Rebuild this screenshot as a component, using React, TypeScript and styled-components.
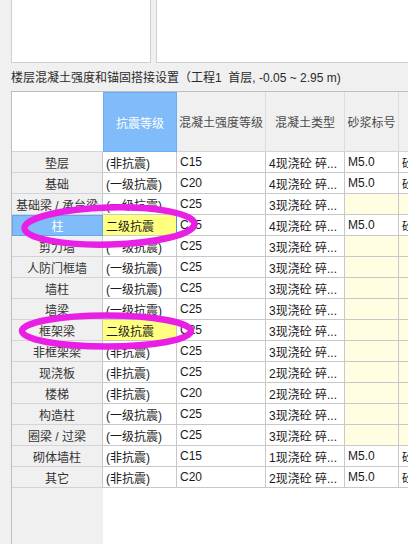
import styled, { createGlobalStyle, css } from "styled-components";

const GlobalStyle = createGlobalStyle`
  html, body {
    margin: 0;
    padding: 0;
    background: #f0f0f0;
    overflow: hidden;
  }
`;

const Page = styled.div`
  position: relative;
  width: 408px;
  height: 544px;
  box-sizing: border-box;
  padding-left: 11px;
  overflow: hidden;
  display: flex;
  flex-direction: column;
  background: #f0f0f0;
  font-family: "Liberation Sans", "Noto Sans CJK SC", sans-serif;
  font-size: 12px;
`;

const TopPanels = styled.div`
  display: flex;
  gap: 5px;
  height: 63px;
  flex-shrink: 0;
`;

const Panel = styled.div<{ $width: number }>`
  flex-shrink: 0;
  width: ${(p) => p.$width}px;
  box-sizing: border-box;
  background: #fff;
  border: 1px solid #cfcfcf;
  border-top: none;
`;

const Title = styled.div`
  height: 28px;
  box-sizing: border-box;
  padding-top: 7px;
  line-height: 17px;
  color: #2b2b2b;
  white-space: nowrap;
`;

const Grid = styled.div`
  flex: 1;
  display: grid;
  grid-template-columns: 91px 74px 89px 79px 54px 80px;
  grid-template-rows: 60px repeat(16, 21px) 1fr;
  border-left: 1px solid #bdbdbd;
  border-top: 1px solid #bdbdbd;
`;

const cellBase = css`
  box-sizing: border-box;
  overflow: hidden;
  white-space: nowrap;
  display: flex;
  align-items: center;
`;

const Corner = styled.div`
  ${cellBase};
  background: #fff;
  border-bottom: 1px solid #d4d4d4;
`;

const HeadCell = styled.div<{ $active?: boolean }>`
  ${cellBase};
  justify-content: center;
  background: #f0f0f0;
  color: #4a4a4a;
  border-right: 1px solid #dcdcdc;
  border-bottom: 1px solid #d4d4d4;

  ${(p) =>
    p.$active &&
    css`
      background: #80bbfa;
      color: #fff;
      border: 1px solid #6aadf4;
    `}
`;

const RowHead = styled.div<{ $selected?: boolean }>`
  ${cellBase};
  justify-content: center;
  background: #f0f0f0;
  color: #333;
  border-right: 1px solid #c8c8c8;
  border-bottom: 1px solid #d4d4d4;

  ${(p) =>
    p.$selected &&
    css`
      background: #80bbfa;
      color: #fff;
      border: 1px solid #62a6ef;
    `}
`;

type Tone = "plain" | "strong" | "soft";

const toneBg: Record<Tone, string> = {
  plain: "#fff",
  strong: "#ffff80",
  soft: "#fffde2",
};

const Cell = styled.div<{ $tone: Tone; $edge?: boolean }>`
  ${cellBase};
  padding: 0 3px;
  color: #1a1a1a;
  background: ${(p) => toneBg[p.$tone]};
  border-right: 1px solid ${(p) => (p.$edge ? "#4b97ea" : "#c8c8c8")};
  border-bottom: 1px solid #c8c8c8;
`;

const FillHead = styled.div`
  background: #f0f0f0;
`;

const FillBody = styled.div`
  grid-column: 2 / -1;
  background: #fff;
`;

const Marks = styled.svg`
  position: absolute;
  left: 0;
  top: 0;
  width: 408px;
  height: 544px;
  pointer-events: none;
`;

type Row = {
  name: string;
  grade: string;
  strength: string;
  concrete: string;
  mortar: string;
  kind: string;
  selected?: boolean;
  changed?: boolean;
};

const rows: Row[] = [
  { name: "垫层", grade: "(非抗震)", strength: "C15", concrete: "4现浇砼 碎...", mortar: "M5.0", kind: "砼" },
  { name: "基础", grade: "(一级抗震)", strength: "C20", concrete: "4现浇砼 碎...", mortar: "M5.0", kind: "砼" },
  { name: "基础梁 / 承台梁", grade: "(一级抗震)", strength: "C25", concrete: "3现浇砼 碎...", mortar: "", kind: "" },
  { name: "柱", grade: "二级抗震", strength: "C25", concrete: "4现浇砼 碎...", mortar: "M5.0", kind: "砼", selected: true, changed: true },
  { name: "剪力墙", grade: "(一级抗震)", strength: "C25", concrete: "3现浇砼 碎...", mortar: "", kind: "" },
  { name: "人防门框墙", grade: "(一级抗震)", strength: "C25", concrete: "3现浇砼 碎...", mortar: "", kind: "" },
  { name: "墙柱", grade: "(一级抗震)", strength: "C25", concrete: "3现浇砼 碎...", mortar: "", kind: "" },
  { name: "墙梁", grade: "(一级抗震)", strength: "C25", concrete: "3现浇砼 碎...", mortar: "", kind: "" },
  { name: "框架梁", grade: "二级抗震", strength: "C25", concrete: "3现浇砼 碎...", mortar: "", kind: "", changed: true },
  { name: "非框架梁", grade: "(非抗震)", strength: "C25", concrete: "3现浇砼 碎...", mortar: "", kind: "" },
  { name: "现浇板", grade: "(非抗震)", strength: "C25", concrete: "2现浇砼 碎...", mortar: "", kind: "" },
  { name: "楼梯", grade: "(非抗震)", strength: "C20", concrete: "2现浇砼 碎...", mortar: "", kind: "" },
  { name: "构造柱", grade: "(一级抗震)", strength: "C25", concrete: "3现浇砼 碎...", mortar: "", kind: "" },
  { name: "圈梁 / 过梁", grade: "(一级抗震)", strength: "C25", concrete: "3现浇砼 碎...", mortar: "", kind: "" },
  { name: "砌体墙柱", grade: "(非抗震)", strength: "C15", concrete: "1现浇砼 碎...", mortar: "M5.0", kind: "砼" },
  { name: "其它", grade: "(非抗震)", strength: "C20", concrete: "2现浇砼 碎...", mortar: "M5.0", kind: "砼" },
];

export default function App() {
  return (
    <Page>
      <GlobalStyle />
      <TopPanels>
        <Panel $width={140} />
        <Panel $width={300} />
      </TopPanels>
      <Title>楼层混凝土强度和锚固搭接设置（工程1&nbsp;&nbsp;首层, -0.05 ~ 2.95 m)</Title>
      <Grid>
        <Corner />
        <HeadCell $active>抗震等级</HeadCell>
        <HeadCell>混凝土强度等级</HeadCell>
        <HeadCell>混凝土类型</HeadCell>
        <HeadCell>砂浆标号</HeadCell>
        <HeadCell />
        {rows.map((r) => {
          const empty = r.mortar === "";
          return [
            <RowHead key={r.name + "h"} $selected={r.selected}>
              {r.name}
            </RowHead>,
            <Cell key={r.name + "g"} $tone={r.changed ? "strong" : "plain"} $edge={r.selected}>
              {r.grade}
            </Cell>,
            <Cell key={r.name + "s"} $tone="plain">
              {r.strength}
            </Cell>,
            <Cell key={r.name + "c"} $tone="plain">
              {r.concrete}
            </Cell>,
            <Cell key={r.name + "m"} $tone={empty ? "soft" : "plain"}>
              {r.mortar}
            </Cell>,
            <Cell key={r.name + "k"} $tone={empty ? "soft" : "plain"}>
              {r.kind}
            </Cell>,
          ];
        })}
        <FillHead />
        <FillBody />
      </Grid>
      <Marks viewBox="0 0 408 544">
        <ellipse
          cx="109.5"
          cy="226"
          rx="85"
          ry="18.5"
          fill="none"
          stroke="#ea1fe6"
          strokeWidth="6.5"
          transform="rotate(-1.5 109.5 226)"
        />
        <ellipse cx="106.5" cy="331" rx="84.5" ry="15.5" fill="none" stroke="#ea1fe6" strokeWidth="6.5" />
      </Marks>
    </Page>
  );
}
